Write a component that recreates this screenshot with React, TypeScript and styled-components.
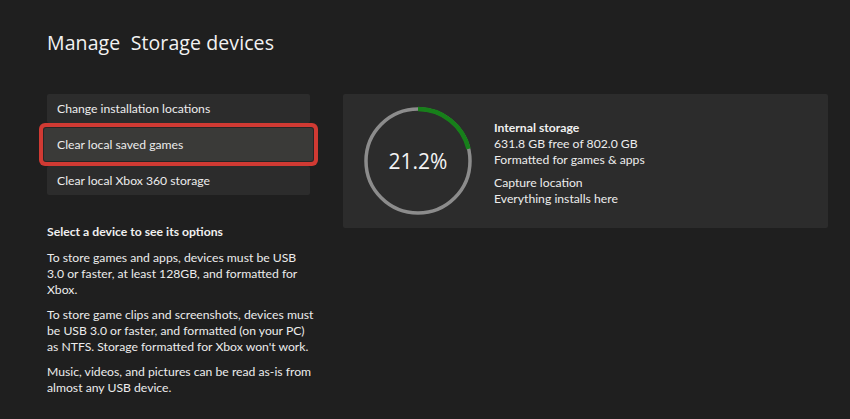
import React from 'react';
import styled, { createGlobalStyle } from 'styled-components';

const GlobalStyle = createGlobalStyle`
  html, body {
    margin: 0;
    padding: 0;
    background: #1f1f1f;
  }
  body {
    font-family: Lato, 'Open Sans', sans-serif;
    color: #f0f0f0;
  }
`;

const menuItems = [
  { label: 'Change installation locations', focused: false },
  { label: 'Clear local saved games', focused: true },
  { label: 'Clear local Xbox 360 storage', focused: false },
];

const usedPercent = 21.2;

const StorageRing = ({ percent }: { percent: number }) => {
  const r = 52;
  const c = 2 * Math.PI * r;
  const arc = (c * percent) / 100;
  return (
    <RingWrap>
      <svg width="110" height="110" viewBox="0 0 110 110">
        <circle cx="55" cy="55" r={r} fill="none" stroke="#8c8c8c" strokeWidth="3.5" />
        <circle
          cx="55"
          cy="55"
          r={r}
          fill="none"
          stroke="#17801a"
          strokeWidth="4.5"
          strokeDasharray={`${arc} ${c}`}
          transform="rotate(-90 55 55)"
        />
      </svg>
      <RingLabel>{percent}%</RingLabel>
    </RingWrap>
  );
};

const App = () => {
  return (
    <Page>
      <GlobalStyle />
      <Title>Manage&nbsp; Storage devices</Title>
      <Main>
        <LeftColumn>
          <Menu>
            {menuItems.map((item) => (
              <MenuButton key={item.label} $focused={item.focused}>
                {item.label}
              </MenuButton>
            ))}
          </Menu>
          <Info>
            <InfoHeading>Select a device to see its options</InfoHeading>
            <InfoText>
              To store games and apps, devices must be USB
              <br />
              3.0 or faster, at least 128GB, and formatted for
              <br />
              Xbox.
            </InfoText>
            <InfoText>
              To store game clips and screenshots, devices must
              <br />
              be USB 3.0 or faster, and formatted (on your PC)
              <br />
              as NTFS. Storage formatted for Xbox won't work.
            </InfoText>
            <InfoText>
              Music, videos, and pictures can be read as-is from
              <br />
              almost any USB device.
            </InfoText>
          </Info>
        </LeftColumn>
        <DeviceCard>
          <StorageRing percent={usedPercent} />
          <DeviceDetails>
            <DetailGroup>
              <DeviceName>Internal storage</DeviceName>
              <DetailLine>631.8 GB free of 802.0 GB</DetailLine>
              <DetailLine>Formatted for games &amp; apps</DetailLine>
            </DetailGroup>
            <DetailGroup>
              <DetailLine>Capture location</DetailLine>
              <DetailLine>Everything installs here</DetailLine>
            </DetailGroup>
          </DeviceDetails>
        </DeviceCard>
      </Main>
    </Page>
  );
};

export default App;

const Page = styled.div`
  width: 850px;
  height: 419px;
  box-sizing: border-box;
  padding: 29px 22px 0 47px;
  overflow: hidden;
`;

const Title = styled.h1`
  margin: 0;
  font-family: 'Open Sans', sans-serif;
  font-weight: 400;
  font-size: 19.5px;
  line-height: 28px;
  color: #f2f2f2;
  letter-spacing: 0.1px;
`;

const Main = styled.div`
  display: flex;
  gap: 33px;
  margin-top: 37px;
  align-items: flex-start;
`;

const LeftColumn = styled.div`
  width: 263px;
  display: flex;
  flex-direction: column;
`;

const Menu = styled.div`
  display: flex;
  flex-direction: column;
  gap: 7px;
`;

const MenuButton = styled.div<{ $focused: boolean }>`
  height: 29px;
  display: flex;
  align-items: center;
  padding-left: 10px;
  font-size: 12.2px;
  color: #ececec;
  border-radius: 2px;
  background: ${(p) => (p.$focused ? '#3a3a38' : '#2c2c2c')};
  ${(p) =>
    p.$focused &&
    `
    margin: -2px -3px;
    height: 33px;
    padding-left: 13px;
    box-shadow: 0 0 0 1px #262626, 0 0 0 5px #d03a33;
  `}
`;

const Info = styled.div`
  margin-top: 29px;
  display: flex;
  flex-direction: column;
  gap: 9px;
`;

const InfoHeading = styled.div`
  font-weight: 700;
  font-size: 12.2px;
  line-height: 16px;
  margin-bottom: 1px;
`;

const InfoText = styled.p`
  margin: 0;
  font-size: 12.2px;
  line-height: 16px;
  white-space: nowrap;
  color: #ececec;
`;

const DeviceCard = styled.div`
  width: 485px;
  height: 134px;
  box-sizing: border-box;
  background: #2c2c2c;
  border-radius: 2px;
  display: flex;
  align-items: flex-start;
  padding: 12px 0 0 20px;
  gap: 21px;
`;

const RingWrap = styled.div`
  position: relative;
  width: 110px;
  height: 110px;
  display: flex;
  align-items: center;
  justify-content: center;

  svg {
    position: absolute;
    inset: 0;
  }
`;

const RingLabel = styled.span`
  font-family: 'Open Sans', sans-serif;
  font-size: 21px;
  font-weight: 400;
  color: #f4f4f4;
`;

const DeviceDetails = styled.div`
  margin-top: 14px;
  display: flex;
  flex-direction: column;
  gap: 7px;
`;

const DetailGroup = styled.div`
  display: flex;
  flex-direction: column;
`;

const DeviceName = styled.div`
  font-weight: 700;
  font-size: 12.2px;
  line-height: 16px;
`;

const DetailLine = styled.div`
  font-size: 12.2px;
  line-height: 16px;
  color: #ececec;
`;
